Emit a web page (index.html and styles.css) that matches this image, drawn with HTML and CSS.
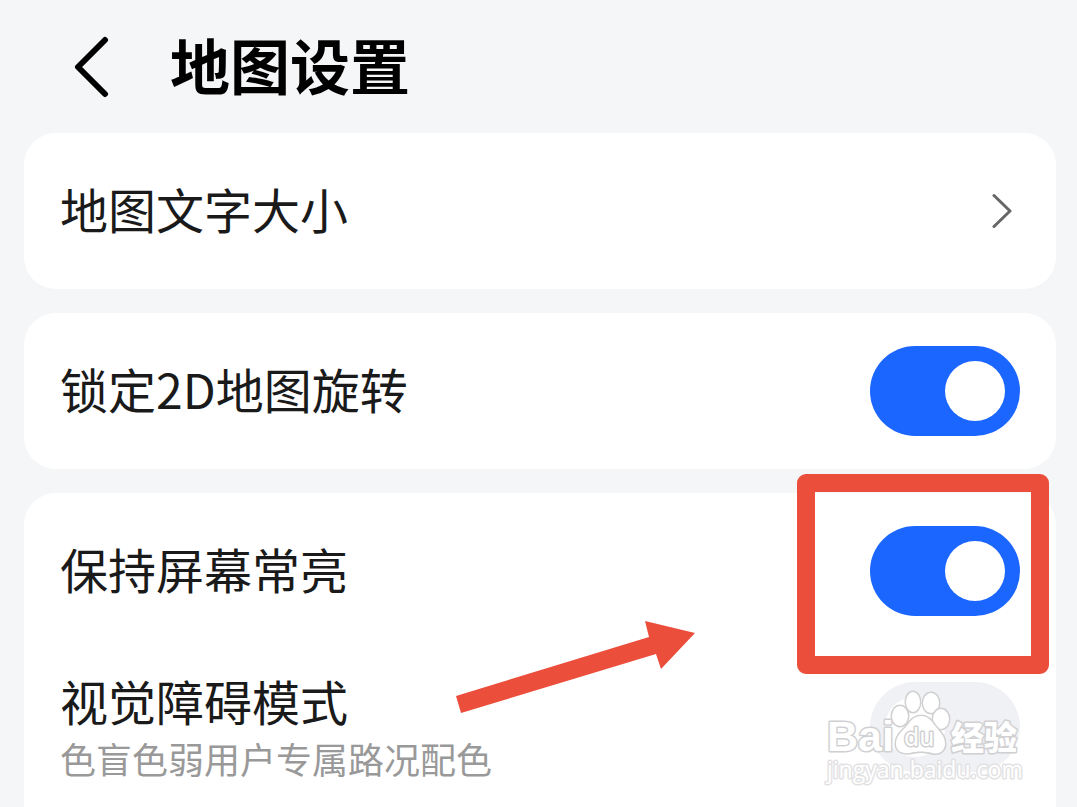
FILE: index.html
```
<!DOCTYPE html>
<html lang="zh-CN">
<head>
	<meta charset="utf-8">
	<meta name="viewport" content="width=device-width, initial-scale=1">
	<title>地图设置</title>
	<link rel="stylesheet" href="styles.css">
</head>
<body>
	<div class="screen">
		<header class="titlebar">
			<button type="button" class="back" aria-label="返回">
				<svg width="36" height="62" viewBox="0 0 36 62"><path d="M31 4L4 31L31 58"/></svg>
			</button>
			<h1>地图设置</h1>
		</header>

		<main class="settings">
			<section class="card">
				<a class="row" href="#text-size">
					<span class="label">地图文字大小</span>
					<svg class="chevron" width="28" height="40" viewBox="0 0 28 40"><path d="M2 4.500L18 20L2 35.500"/></svg>
				</a>
			</section>

			<section class="card">
				<div class="row">
					<label class="label" for="lock-rotate">锁定2D地图旋转</label>
					<span class="control"><input type="checkbox" class="toggle" id="lock-rotate" checked></span>
				</div>
			</section>

			<section class="card last">
				<div class="row">
					<label class="label" for="keep-on">保持屏幕常亮</label>
					<span class="control">
						<input type="checkbox" class="toggle" id="keep-on" checked>
						<span class="highlight"></span>
						<svg class="arrow" width="240" height="94" viewBox="0 0 240 94"><path d="M0 76L193 17L189 1L239 13L205 49L200 34L5 93Z"/></svg>
					</span>
				</div>
				<div class="row tall">
					<label class="label" for="vision">视觉障碍模式<small>色盲色弱用户专属路况配色</small></label>
					<span class="control">
						<input type="checkbox" class="toggle" id="vision">
						<svg class="watermark" width="200" height="100" viewBox="0 0 200 100">
							<text class="brand" x="3" y="63">Bai</text>
							<g class="paw">
								<ellipse cx="76" cy="28" rx="8" ry="10"/>
								<ellipse cx="89" cy="14" rx="7" ry="10"/>
								<ellipse cx="107" cy="15" rx="8" ry="10"/>
								<ellipse cx="117" cy="31" rx="8" ry="10"/>
								<path d="M97 28C89 28 86 34 82 39C77 44 72 48 72 56C72 63 78 66 86 65C93 63 101 63 108 65C116 67 121 62 121 56C121 48 116 44 112 39C108 34 105 28 97 28Z"/>
							</g>
							<text class="du" x="80" y="58">du</text>
							<text class="exp" x="127" y="62">经验</text>
							<text class="site" x="3" y="90">jingyan.baidu.com</text>
						</svg>
					</span>
				</div>
			</section>
		</main>
	</div>
</body>
</html>
```
FILE: styles.css
```
*					{ box-sizing: border-box; }
body				{ margin: 0; background: #f5f6f8; color: #1a1a1a;
					  font-family: "Noto Sans CJK SC", sans-serif; }
.screen				{ height: 100vh; overflow: hidden; }

.titlebar			{ display: flex; align-items: center; gap: 60px; height: 133px; padding: 0 74px; }
.titlebar h1		{ margin: 0; padding-bottom: 6px; font-size: 60px; line-height: 72px; font-weight: 700; color: #000; }
.back				{ display: flex; padding: 0; border: 0; background: none; cursor: pointer; }
.back path			{ fill: none; stroke: #000; stroke-width: 6; stroke-linecap: round; stroke-linejoin: round; }

.settings			{ display: flex; flex-direction: column; gap: 24px; padding: 0 21px 0 24px; }
.card				{ background: #fff; border-radius: 32px; }
.card.last			{ padding-bottom: 72px; }
.row				{ display: flex; align-items: center; justify-content: space-between;
					  min-height: 156px; padding: 0 36px; color: inherit; text-decoration: none; }
.row.tall			{ min-height: 0; padding-top: 17px; }
.label				{ padding-bottom: 6px; font-size: 48px; line-height: 68px; }
.label small		{ display: block; font-size: 36px; line-height: 48px; color: #999; }
.chevron path		{ fill: none; stroke: #666; stroke-width: 3; stroke-linecap: round; stroke-linejoin: round; }

.control			{ position: relative; display: flex; }
.toggle				{ appearance: none; display: flex; margin: 0; width: 150px; height: 90px; padding: 15px;
					  border-radius: 45px; background: #f0f1f5; cursor: pointer; }
.toggle::before		{ content: ""; width: 60px; height: 60px; border-radius: 50%; background: #fff; }
.toggle:checked		{ justify-content: flex-end; background: #1b66ff; }

/* marks drawn over the list */
.highlight			{ position: absolute; top: -52px; right: -29px; bottom: -58px; left: -73px;
					  border: 18px solid #eb4e3b; border-radius: 9px; pointer-events: none; }
.arrow				{ position: absolute; top: 94px; right: 324px; fill: #eb4e3b; pointer-events: none; }
.watermark			{ position: absolute; top: 6px; right: -4px; pointer-events: none; }
.watermark text,
.paw				{ fill: #fff; stroke: #d0d0d2; stroke-width: 3; stroke-linejoin: round; paint-order: stroke; }
.watermark .brand	{ font: bold 43px "Liberation Sans", sans-serif; }
.watermark .du		{ font: 24px "DejaVu Sans", sans-serif; }
.watermark .exp		{ font: 900 33px "Noto Sans CJK SC", sans-serif; }
.watermark .site	{ font: 23px "Open Sans", sans-serif; stroke: #e2e2e4; }
```
